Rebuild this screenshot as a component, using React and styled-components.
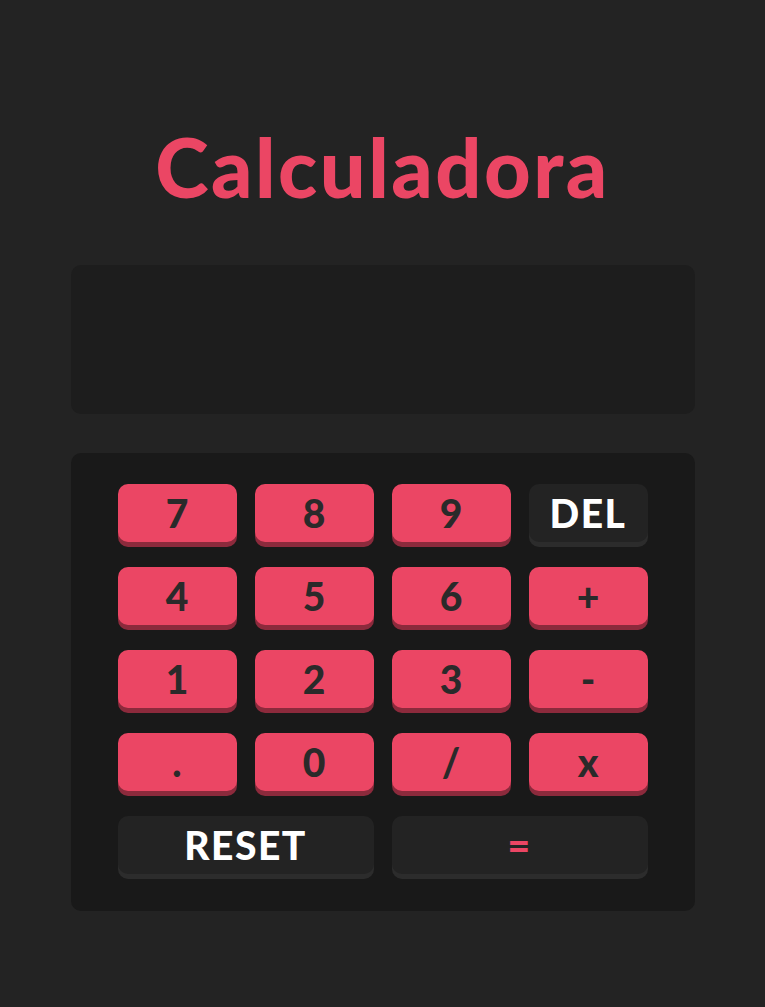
import React from 'react';
import styled, { createGlobalStyle } from 'styled-components';

const GlobalStyle = createGlobalStyle`
    body {
        margin: 0;
        background-color: #232323;
        font-family: "Lato", "Open Sans", sans-serif;
    }
`

const Wrapper = styled.div`
    width: 624px;
    margin: 0 auto;
    padding-top: 126px;
    padding-bottom: 97px;
    display: flex;
    flex-direction: column;
`

const Title = styled.h1`
    margin: 0;
    height: 139px;
    color: #eb4664;
    font-size: 81px;
    font-weight: 900;
    letter-spacing: 2.5px;
    line-height: 1;
    text-align: center;
`

const Display = styled.div`
    height: 149px;
    background-color: #1d1d1d;
    border-radius: 10px;
    margin-bottom: 39px;
`

const Keypad = styled.div`
    background-color: #191919;
    border-radius: 10px;
    padding: 31px 46px 37px 47px;
    display: grid;
    grid-template-columns: repeat(4, 119px);
    column-gap: 18px;
    row-gap: 25px;
`

const Key = styled.button`
    height: 58px;
    border: none;
    border-radius: 10px;
    grid-column: span ${props => props.$span || 1};
    background-color: ${props => props.$dark ? '#232323' : '#eb4664'};
    box-shadow: 0 5px 0 ${props => props.$dark ? '#2c2c2c' : '#8c2a3c'};
    color: ${props => props.$color || '#2a2a2a'};
    font-family: "Lato", "Open Sans", sans-serif;
    font-size: 39px;
    font-weight: 900;
    letter-spacing: ${props => props.$dark ? '1.5px' : '0'};
    line-height: 1;
    padding: 0;
    cursor: pointer;
`

const keys = [
    { label: '7' }, { label: '8' }, { label: '9' }, { label: 'DEL', dark: true, color: '#ffffff' },
    { label: '4' }, { label: '5' }, { label: '6' }, { label: '+' },
    { label: '1' }, { label: '2' }, { label: '3' }, { label: '-' },
    { label: '.' }, { label: '0' }, { label: '/' }, { label: 'x' },
    { label: 'RESET', dark: true, color: '#ffffff', span: 2 },
    { label: '=', dark: true, color: '#eb4664', span: 2 },
]

const App = () => {
    return (
        <>
            <GlobalStyle />
            <Wrapper>
                <Title>Calculadora</Title>
                <Display />
                <Keypad>
                    {keys.map(k => (
                        <Key
                            key={k.label}
                            $dark={k.dark}
                            $color={k.color}
                            $span={k.span}
                        >{k.label}</Key>
                    ))}
                </Keypad>
            </Wrapper>
        </>
    )
}

export default App
